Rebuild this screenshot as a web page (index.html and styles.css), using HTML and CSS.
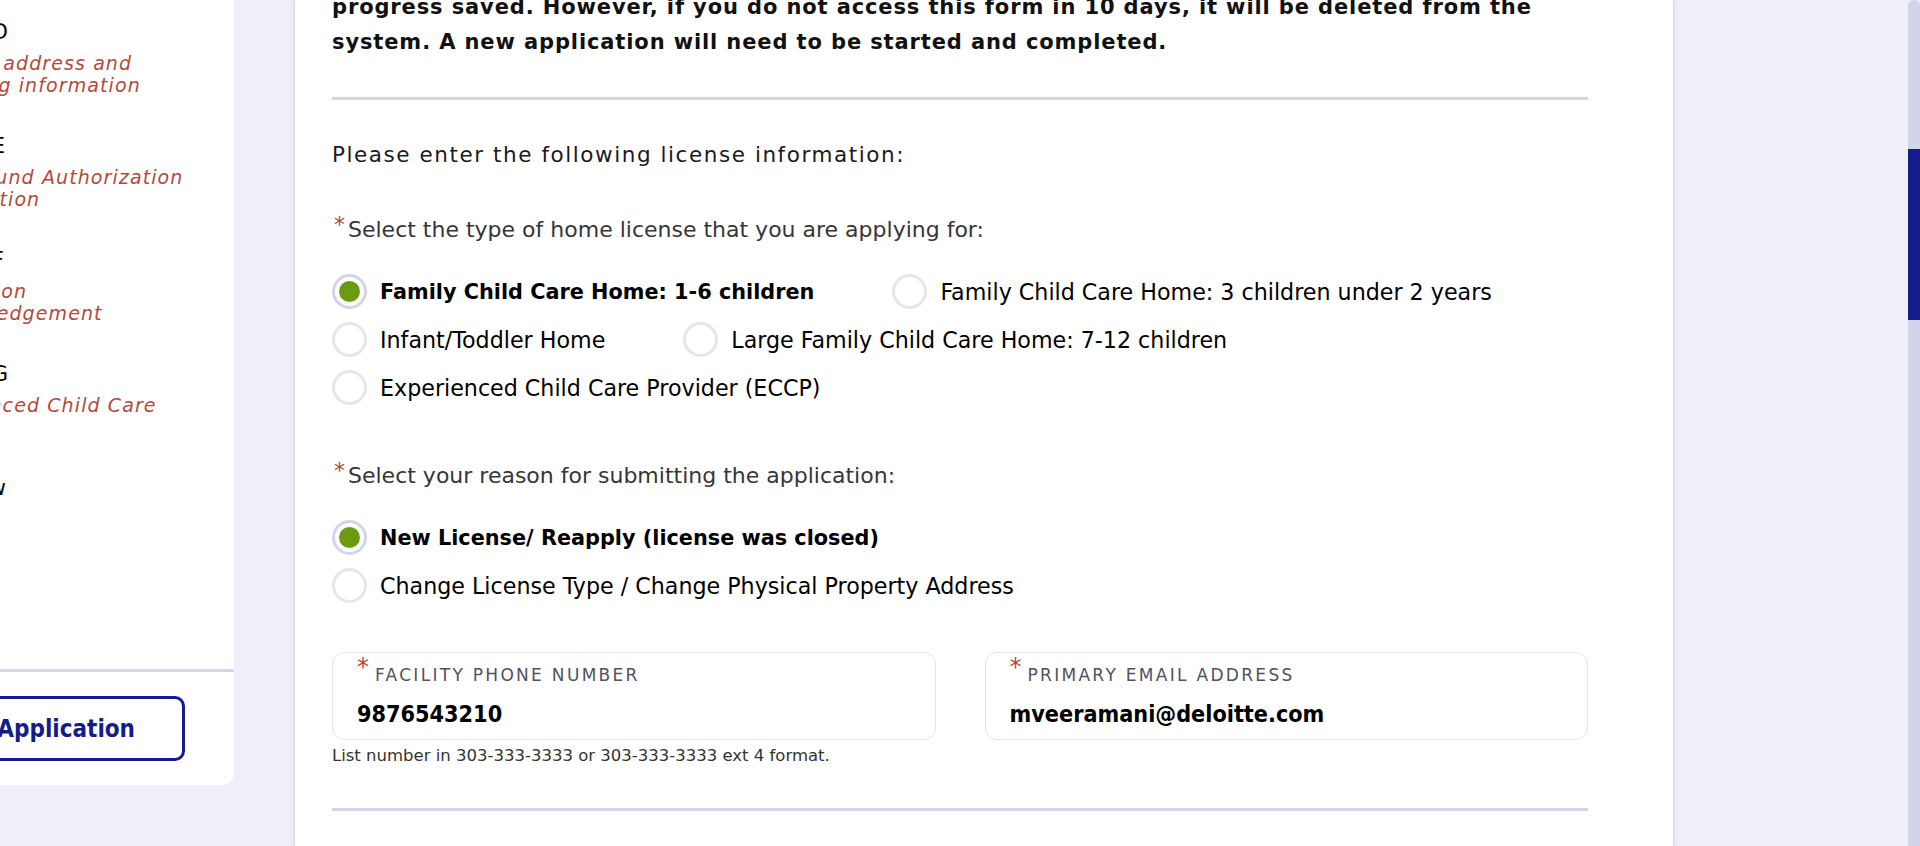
FILE: index.html
```html
<!DOCTYPE html>
<html lang="en">
<head>
<meta charset="utf-8">
<title>License Application</title>
<link rel="stylesheet" href="styles.css">
</head>
<body>
<div class="app">
  <aside class="sidebar">
    <nav class="steps">
      <div class="step">
        <div class="step-title">Section D</div>
        <div class="step-sub">Physical address and<br>operating information</div>
      </div>
      <div class="step">
        <div class="step-title">Section E</div>
        <div class="step-sub">Background Authorization<br>Certification</div>
      </div>
      <div class="step">
        <div class="step-title">Section F</div>
        <div class="step-sub">Attestation<br>Acknowledgement</div>
      </div>
      <div class="step">
        <div class="step-title">Section G</div>
        <div class="step-sub">Experienced Child Care<br>Provider</div>
      </div>
      <div class="step">
        <div class="step-title">Overview</div>
      </div>
    </nav>
    <div class="side-footer">
      <button class="btn-outline" type="button">Save Application</button>
    </div>
  </aside>

  <main class="card">
    <p class="notice">Your application is saved as you go. You may leave and return to it at any time with all your<br>progress saved. However, if you do not access this form in 10 days, it will be deleted from the<br>system. A new application will need to be started and completed.</p>
    <div class="sep"></div>

    <p class="intro">Please enter the following license information:</p>

    <div class="question"><span class="req">*</span>Select the type of home license that you are applying for:</div>
    <div class="options">
      <label class="opt sel"><span class="radio"></span><span>Family Child Care Home: 1-6 children</span></label>
      <label class="opt"><span class="radio"></span><span>Family Child Care Home: 3 children under 2 years</span></label>
      <label class="opt"><span class="radio"></span><span>Infant/Toddler Home</span></label>
      <label class="opt"><span class="radio"></span><span>Large Family Child Care Home: 7-12 children</span></label>
      <label class="opt"><span class="radio"></span><span>Experienced Child Care Provider (ECCP)</span></label>
    </div>

    <div class="question q2"><span class="req">*</span>Select your reason for submitting the application:</div>
    <div class="options">
      <label class="opt sel"><span class="radio"></span><span>New License/ Reapply (license was closed)</span></label>
      <label class="opt"><span class="radio"></span><span>Change License Type / Change Physical Property Address</span></label>
    </div>

    <div class="fields">
      <div class="field-wrap">
        <div class="field">
          <div class="field-label"><span class="field-req">*</span>FACILITY PHONE NUMBER</div>
          <div class="field-value">9876543210</div>
        </div>
        <p class="hint">List number in 303-333-3333 or 303-333-3333 ext 4 format.</p>
      </div>
      <div class="field-wrap">
        <div class="field">
          <div class="field-label"><span class="field-req">*</span>PRIMARY EMAIL ADDRESS</div>
          <div class="field-value">mveeramani@deloitte.com</div>
        </div>
      </div>
    </div>
    <div class="sep sep-bottom"></div>
  </main>

  <div class="spacer"></div>
  <div class="scrollbar"><div class="thumb"></div></div>
</div>
</body>
</html>
```
FILE: styles.css
```css
html, body {
  margin: 0;
  height: 100%;
  overflow: hidden;
}
body {
  background: #eeeff8;
  font-family: "DejaVu Sans", sans-serif;
  color: #000;
}
.app {
  display: flex;
  align-items: flex-start;
  height: 846px;
}

/* ---------- sidebar ---------- */
.sidebar {
  width: 234px;
  height: 785px;
  flex: none;
  margin-right: 61px;
  background: #fff;
  border-radius: 0 0 12px 0;
  display: flex;
  flex-direction: column;
  overflow: hidden;
}
.steps {
  flex: 1;
  padding-top: 20px;
  margin-left: -90px;
}
.step {
  margin-bottom: 38.3px;
}
.step-title {
  font-size: 21px;
  line-height: 24px;
  margin: 0 0 7.7px -3px;
  white-space: nowrap;
  color: #000;
}
.step-sub {
  font-size: 19px;
  line-height: 22px;
  letter-spacing: 1.1px;
  font-style: italic;
  color: #b3493a;
  white-space: nowrap;
}
.side-footer {
  border-top: 3px solid #d1d4ea;
  padding: 24px 0 24px;
}
.btn-outline {
  display: flex;
  align-items: center;
  justify-content: flex-end;
  width: 300px;
  height: 65px;
  box-sizing: border-box;
  margin-left: -115px;
  padding: 0 47px 0 0;
  border: 3px solid #121c8b;
  border-radius: 10px;
  background: #fff;
  color: #121c8b;
  font: 700 24px "DejaVu Sans Condensed", "DejaVu Sans", sans-serif;
  white-space: nowrap;
}

/* ---------- main card ---------- */
.card {
  width: 1378px;
  flex: none;
  align-self: stretch;
  box-sizing: border-box;
  padding: 0 85px 0 37px;
  background: #fff;
  box-shadow: 0 0 4px rgba(50, 50, 110, 0.25);
}
.notice {
  margin: -45px 0 0;
  font-size: 21px;
  font-weight: 700;
  line-height: 35px;
  letter-spacing: 0.88px;
  color: #111;
  white-space: nowrap;
}
.sep {
  height: 3px;
  background: #d1d4ea;
  margin-top: 37px;
}
.sep-bottom {
  margin-top: 42px;
}
.intro {
  margin: 40px 0 0;
  font-size: 21.5px;
  line-height: 30px;
  letter-spacing: 1.56px;
  color: #1a1a1a;
}
.question {
  margin-top: 45px;
  font-size: 22px;
  line-height: 30px;
  color: #363636;
  white-space: nowrap;
}
.q2 {
  margin-top: 56px;
}
.req {
  color: #b5472e;
  font-size: 22px;
  line-height: 0;
  vertical-align: 5px;
  margin: 0 3px 0 2px;
}
.options {
  display: flex;
  flex-wrap: wrap;
  column-gap: 78px;
  row-gap: 13px;
  margin-top: 29px;
}
.opt {
  display: flex;
  align-items: center;
  height: 35px;
  font-size: 22.2px;
  white-space: nowrap;
  color: #000;
}
.opt.sel {
  font-size: 20.8px;
  font-weight: 700;
}
.radio {
  width: 35px;
  height: 35px;
  box-sizing: border-box;
  flex: none;
  margin-right: 13px;
  border: 3px solid #e6e6e6;
  border-radius: 50%;
  background: #fff;
  display: grid;
  place-items: center;
}
.opt.sel .radio {
  border-color: #d2d4ea;
}
.opt.sel .radio::after {
  content: "";
  width: 21px;
  height: 21px;
  border-radius: 50%;
  background: #6b9a13;
}

/* ---------- text fields ---------- */
.fields {
  display: grid;
  grid-template-columns: 1fr 1fr;
  column-gap: 49px;
  margin-top: 49px;
}
.field {
  border: 1px solid #e4e4e4;
  border-radius: 12px;
  padding: 12px 24px 11px;
}
.field-label {
  font-size: 17px;
  line-height: 20px;
  letter-spacing: 2.3px;
  color: #50525e;
  white-space: nowrap;
}
.field-req {
  font-size: 24px;
  line-height: 0;
  letter-spacing: 0;
  vertical-align: 6px;
  color: #b5472e;
  margin-right: 6px;
}
.field-value {
  margin-top: 15px;
  font: 700 23.2px/28px "DejaVu Sans Condensed", "DejaVu Sans", sans-serif;
  color: #000;
}
.hint {
  margin: 6px 0 0;
  font-size: 16.5px;
  line-height: 20px;
  color: #333;
  white-space: nowrap;
}

/* ---------- scrollbar ---------- */
.spacer {
  flex: 1;
}
.scrollbar {
  width: 12px;
  flex: none;
  align-self: stretch;
  background: #d2d4ea;
  border-radius: 6px 6px 0 0;
}
.thumb {
  margin-top: 149px;
  height: 171px;
  background: #121c8b;
}
```
